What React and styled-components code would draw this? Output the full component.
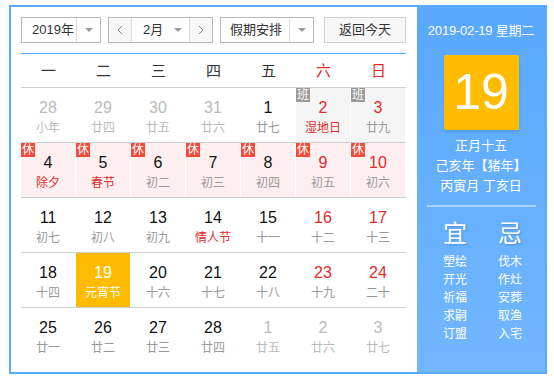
import React from 'react';
import styled, { createGlobalStyle } from 'styled-components';

const GlobalStyle = createGlobalStyle`
  html, body {
    margin: 0;
    padding: 0;
    background: #fff;
  }
  body {
    font-family: "Liberation Sans", Arial, "Noto Sans CJK SC", sans-serif;
    color: #333;
  }
`;

const Page = styled.div`
  padding: 5px 0 0 9px;
`;

const Box = styled.div`
  display: flex;
  width: 534px;
  height: 365px;
  border: 2px solid #5aa9ff;
  box-sizing: content-box;
`;

const Main = styled.div`
  width: 385px;
  padding: 10px 11px 0 10px;
`;

const Toolbar = styled.div`
  display: flex;
  align-items: center;
  height: 26px;
  margin-bottom: 10px;
`;

const Select = styled.div`
  display: flex;
  flex-shrink: 0;
  height: 24px;
  width: ${p => p.width}px;
  margin-right: ${p => p.gap || 0}px;
  border: 1px solid #b8b8b8;
  background: #fff;
  font-size: 13px;
  line-height: 24px;
  color: #333;
`;

const SelectText = styled.div`
  flex: 1;
  min-width: 0;
  padding-left: ${p => p.pad || 10}px;
  white-space: nowrap;
`;

const Caret = styled.div`
  flex: 0 0 23px;
  border-left: 1px solid ${p => (p.plain ? 'transparent' : '#dcdcdc')};
  display: flex;
  align-items: center;
  justify-content: center;
  &::after {
    content: '';
    border-left: 4px solid transparent;
    border-right: 4px solid transparent;
    border-top: 4px solid #999;
  }
`;

const StepButton = styled.div`
  flex: 0 0 22px;
  display: flex;
  align-items: center;
  justify-content: center;
  background: #f7f7f7;
  border-left: ${p => (p.side === 'right' ? '1px solid #dcdcdc' : 'none')};
  border-right: ${p => (p.side === 'left' ? '1px solid #dcdcdc' : 'none')};
`;

const TodayButton = styled.div`
  margin-left: auto;
  width: 80px;
  height: 24px;
  border: 1px solid #d0d0d0;
  background: #f7f7f7;
  font-size: 13px;
  line-height: 24px;
  text-align: center;
  color: #333;
`;

const Table = styled.div`
  border-top: 1px solid #5aa9ff;
`;

const Row = styled.div`
  display: grid;
  grid-template-columns: repeat(7, 55px);
  border-bottom: 1px solid ${p => (p.last ? 'transparent' : '#cfcfcf')};
`;

const Weekday = styled.div`
  height: 33px;
  line-height: 33px;
  text-align: center;
  font-size: 15px;
  color: ${p => (p.weekend ? '#e02b2b' : '#333')};
`;

const Cell = styled.div`
  position: relative;
  height: 54px;
  margin-right: 1px;
  text-align: center;
  padding-top: 10px;
  box-sizing: border-box;
  background: ${p =>
    p.today ? '#ffbb00' : p.mark === 'rest' ? '#fdefef' : p.mark === 'work' ? '#f5f5f5' : '#fff'};
`;

const Num = styled.div`
  font-size: 16px;
  line-height: 20px;
  color: ${p => (p.today ? '#fff' : p.other ? '#bbb' : p.weekend ? '#e02b2b' : '#111')};
`;

const Lunar = styled.div`
  font-size: 12px;
  line-height: 20px;
  color: ${p => (p.today ? '#fff' : p.other ? '#bbb' : p.fest ? '#e02b2b' : '#999')};
`;

const Badge = styled.span`
  position: absolute;
  left: 0;
  top: 0;
  width: 14px;
  height: 14px;
  font-size: 12px;
  line-height: 14px;
  color: #fff;
  background: ${p => (p.mark === 'rest' ? '#f44a3a' : '#999')};
`;

const Side = styled.div`
  width: 128px;
  background: linear-gradient(#58a8ff, #72b7ff);
  color: #fff;
  text-align: center;
  padding-top: 14px;
  box-sizing: border-box;
`;

const SideDate = styled.div`
  font-size: 13px;
  line-height: 20px;
  letter-spacing: -0.2px;
`;

const BigDay = styled.div`
  width: 75px;
  height: 75px;
  margin: 14px auto 6px;
  background: #ffbb00;
  border-radius: 2px;
  box-shadow: 0 2px 3px rgba(0, 0, 0, 0.12);
  font-size: 50px;
  line-height: 75px;
`;

const SideLine = styled.div`
  font-size: 13px;
  line-height: 20px;
  white-space: nowrap;
`;

const Divider = styled.div`
  height: 2px;
  margin: 9px 9px 0 10px;
  background: rgba(255, 255, 255, 0.45);
`;

const Advice = styled.div`
  display: grid;
  grid-template-columns: 55px 55px;
  justify-content: center;
  padding-left: 3px;
  margin-top: 12px;
`;

const AdviceHead = styled.div`
  font-size: 24px;
  line-height: 30px;
  margin-bottom: 4px;
  text-shadow: 1px 1px 2px rgba(0, 40, 120, 0.25);
`;

const AdviceItem = styled.div`
  font-size: 12px;
  line-height: 18px;
`;

const Chevron = ({ dir }) => (
  <svg width="6" height="10" viewBox="0 0 6 10">
    <polyline
      points={dir === 'left' ? '5,1 1,5 5,9' : '1,1 5,5 1,9'}
      fill="none"
      stroke="#888"
      strokeWidth="1"
    />
  </svg>
);

const weekdays = ['一', '二', '三', '四', '五', '六', '日'];

const d = (n, lunar, o = {}) => ({ n, lunar, ...o });

const weeks = [
  [
    d(28, '小年', { other: true }),
    d(29, '廿四', { other: true }),
    d(30, '廿五', { other: true }),
    d(31, '廿六', { other: true }),
    d(1, '廿七'),
    d(2, '湿地日', { mark: 'work', fest: true }),
    d(3, '廿九', { mark: 'work' }),
  ],
  [
    d(4, '除夕', { mark: 'rest', fest: true }),
    d(5, '春节', { mark: 'rest', fest: true }),
    d(6, '初二', { mark: 'rest' }),
    d(7, '初三', { mark: 'rest' }),
    d(8, '初四', { mark: 'rest' }),
    d(9, '初五', { mark: 'rest' }),
    d(10, '初六', { mark: 'rest' }),
  ],
  [
    d(11, '初七'),
    d(12, '初八'),
    d(13, '初九'),
    d(14, '情人节', { fest: true }),
    d(15, '十一'),
    d(16, '十二'),
    d(17, '十三'),
  ],
  [
    d(18, '十四'),
    d(19, '元宵节', { today: true }),
    d(20, '十六'),
    d(21, '十七'),
    d(22, '十八'),
    d(23, '十九'),
    d(24, '二十'),
  ],
  [
    d(25, '廿一'),
    d(26, '廿二'),
    d(27, '廿三'),
    d(28, '廿四'),
    d(1, '廿五', { other: true }),
    d(2, '廿六', { other: true }),
    d(3, '廿七', { other: true }),
  ],
];

const yi = ['塑绘', '开光', '祈福', '求嗣', '订盟'];
const ji = ['伐木', '作灶', '安葬', '取渔', '入宅'];

export default function App() {
  return (
    <Page>
      <GlobalStyle />
      <Box>
        <Main>
          <Toolbar>
            <Select width={78} gap={7}>
              <SelectText>2019年</SelectText>
              <Caret />
            </Select>
            <Select width={103} gap={7}>
              <StepButton side="left">
                <Chevron dir="left" />
              </StepButton>
              <SelectText pad={11}>2月</SelectText>
              <Caret plain />
              <StepButton side="right">
                <Chevron dir="right" />
              </StepButton>
            </Select>
            <Select width={92}>
              <SelectText pad={9}>假期安排</SelectText>
              <Caret />
            </Select>
            <TodayButton>返回今天</TodayButton>
          </Toolbar>
          <Table>
            <Row>
              {weekdays.map((w, i) => (
                <Weekday key={w} weekend={i > 4}>
                  {w}
                </Weekday>
              ))}
            </Row>
            {weeks.map((week, wi) => (
              <Row key={wi} last={wi === weeks.length - 1}>
                {week.map((day, i) => (
                  <Cell key={i} mark={day.mark} today={day.today}>
                    {day.mark && <Badge mark={day.mark}>{day.mark === 'rest' ? '休' : '班'}</Badge>}
                    <Num today={day.today} other={day.other} weekend={i > 4}>
                      {day.n}
                    </Num>
                    <Lunar today={day.today} other={day.other} fest={day.fest}>
                      {day.lunar}
                    </Lunar>
                  </Cell>
                ))}
              </Row>
            ))}
          </Table>
        </Main>
        <Side>
          <SideDate>2019-02-19 星期二</SideDate>
          <BigDay>19</BigDay>
          <SideLine>正月十五</SideLine>
          <SideLine>己亥年【猪年】</SideLine>
          <SideLine>丙寅月 丁亥日</SideLine>
          <Divider />
          <Advice>
            <div>
              <AdviceHead>宜</AdviceHead>
              {yi.map(t => (
                <AdviceItem key={t}>{t}</AdviceItem>
              ))}
            </div>
            <div>
              <AdviceHead>忌</AdviceHead>
              {ji.map(t => (
                <AdviceItem key={t}>{t}</AdviceItem>
              ))}
            </div>
          </Advice>
        </Side>
      </Box>
    </Page>
  );
}
